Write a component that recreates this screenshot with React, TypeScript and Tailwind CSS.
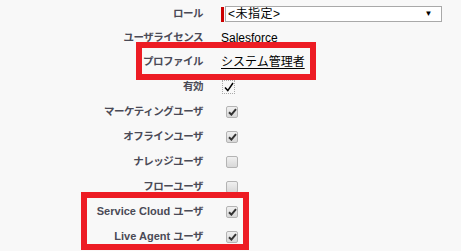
import { Fragment } from "react";

type Row = {
  label: string;
  h: number;
  kind: "select" | "text" | "link" | "tick" | "box";
  value?: string;
  checked?: boolean;
};

const ROWS: Row[] = [
  { label: "ロール", h: 24, kind: "select", value: "<未指定>" },
  { label: "ユーザライセンス", h: 23, kind: "text", value: "Salesforce" },
  { label: "プロファイル", h: 25, kind: "link", value: "システム管理者" },
  { label: "有効", h: 25, kind: "tick" },
  { label: "マーケティングユーザ", h: 25, kind: "box", checked: true },
  { label: "オフラインユーザ", h: 25, kind: "box", checked: true },
  { label: "ナレッジユーザ", h: 25, kind: "box", checked: false },
  { label: "フローユーザ", h: 25, kind: "box", checked: false },
  { label: "Service Cloud ユーザ", h: 25, kind: "box", checked: true },
  { label: "Live Agent ユーザ", h: 25, kind: "box", checked: true },
];

// latin runs are set a bit larger than the kana, like the original page
function Label({ text }: { text: string }) {
  const parts = text.split(/([A-Za-z ]+)/).filter(Boolean);
  return (
    <>
      {parts.map((p, i) =>
        /^[A-Za-z ]+$/.test(p) ? (
          <span key={i} className="whitespace-pre text-[11px] tracking-normal">
            {p}
          </span>
        ) : (
          <span key={i}>{p}</span>
        )
      )}
    </>
  );
}

function Checkbox({ checked }: { checked?: boolean }) {
  return (
    <span className="ml-[5px] flex h-[12px] w-[12px] items-center justify-center rounded-[2px] border border-[#b4b4b4] bg-gradient-to-b from-[#f0f0f0] to-[#d8d8d8]">
      {checked && (
        <svg width="9" height="8" viewBox="0 0 9 8">
          <path d="M1 4.2 L3.4 6.6 L8 1.2" fill="none" stroke="#333" strokeWidth="2" />
        </svg>
      )}
    </span>
  );
}

function Value({ row }: { row: Row }) {
  if (row.kind === "select") {
    return (
      <div className="flex items-center">
        <span className="h-[15px] w-[3px] bg-[#c00]" />
        <div className="ml-[1px] flex h-[16px] w-[217px] items-center justify-between border border-[#a9a9a9] bg-white pl-[2px] pr-[8px] text-[12px] leading-none tracking-[0.5px] text-black">
          <span>{row.value}</span>
          <span className="text-[8px]">▼</span>
        </div>
      </div>
    );
  }
  if (row.kind === "text") return <span className="text-[12px] text-black">{row.value}</span>;
  if (row.kind === "link")
    return <span className="text-[12px] text-black underline underline-offset-2">{row.value}</span>;
  if (row.kind === "tick")
    return (
      <span className="ml-[2px] flex h-[12px] w-[11px] items-center justify-center outline-1 outline-dotted outline-[#aaa]">
        <svg width="10" height="10" viewBox="0 0 10 10">
          <path d="M1 5.5 L3.8 8.6 L9 1" fill="none" stroke="#000" strokeWidth="1.5" />
        </svg>
      </span>
    );
  return <Checkbox checked={row.checked} />;
}

export default function App() {
  return (
    <div
      className="relative h-[251px] w-[461px] overflow-hidden bg-[#f8f8f8] pt-[2px]"
      style={{ fontFamily: '"Liberation Sans", "Noto Sans CJK JP", sans-serif' }}
    >
      <div className="grid grid-cols-[203px_1fr] gap-x-[18px]">
        {ROWS.map((r) => (
          <Fragment key={r.label}>
            <div
              className="flex items-center justify-end text-[10.5px] font-bold tracking-[-0.5px] text-[#4a4a56]"
              style={{ height: r.h }}
            >
              <Label text={r.label} />
            </div>
            <div className="flex items-center" style={{ height: r.h }}>
              <Value row={r} />
            </div>
          </Fragment>
        ))}
      </div>
      <div className="absolute left-[136px] top-[42px] h-[38px] w-[180px] border-[6px] border-[#ed1c24]" />
      <div className="absolute left-[81px] top-[192px] h-[58px] w-[168px] border-[6px] border-[#ed1c24]" />
    </div>
  );
}
